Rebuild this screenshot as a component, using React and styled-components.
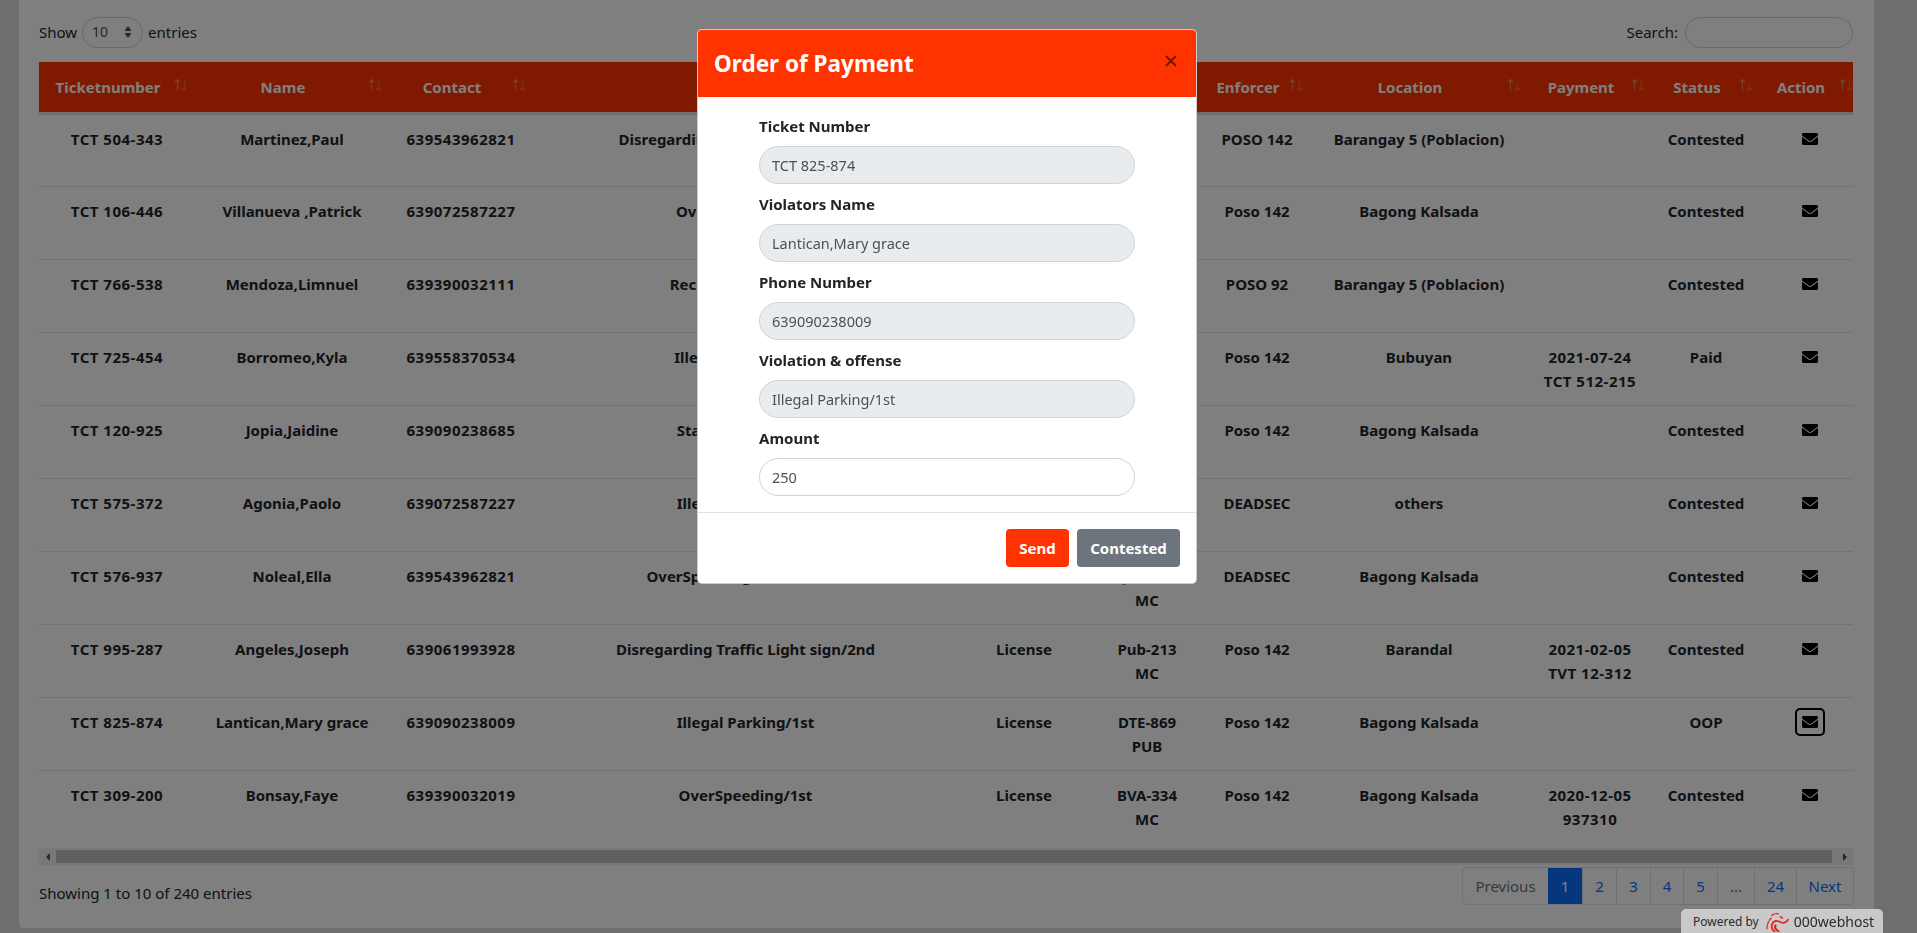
import React from "react";
import styled, { createGlobalStyle } from "styled-components";
import { FaEnvelope } from "react-icons/fa";

const FONT = `"Noto Sans", "Open Sans", "Liberation Sans", sans-serif`;

const Global = createGlobalStyle`
  html, body { margin: 0; height: 100%; overflow: hidden; }
  body { background: #dcdcdc; font-family: ${FONT}; font-size: 15px; line-height: 24px; color: #212529; }
  * { box-sizing: border-box; }
`;

const Page = styled.div`
  height: 933px;
  padding: 0 43px 5px 19px;
`;
const Card = styled.main`
  height: 100%;
  background: #fff;
  border-radius: 0 0 4px 4px;
  padding: 17px 21px 0 20px;
`;
const Controls = styled.div`
  display: flex;
  justify-content: space-between;
  align-items: center;
  height: 31px;
  margin-bottom: 14px;
`;
const Group = styled.label`
  display: flex;
  align-items: center;
  gap: ${p => p.$gap || 5}px;
  padding-bottom: 1px;
`;
const SelectBox = styled.div`
  width: 61px;
  height: 31px;
  border: 1px solid #ced4da;
  border-radius: 16px;
  display: flex;
  align-items: center;
  justify-content: space-between;
  padding: 0 10px 0 9px;
  color: #495057;
  font-size: 14px;
`;
const SearchBox = styled.input`
  width: 168px;
  height: 31px;
  border: 1px solid #ced4da;
  border-radius: 16px;
  background: #fff;
`;
const TableClip = styled.div`
  overflow: hidden;
`;
const Table = styled.table`
  width: 1821px;
  table-layout: fixed;
  border-collapse: collapse;
`;
const HeadRow = styled.tr`
  background: #ff3300;
  border-bottom: 3px solid #dcdcdc;
`;
const Th = styled.th`
  position: relative;
  height: 51px;
  padding: 12px 26px 12px 8px;
  color: #fff;
  font-weight: 700;
  text-align: center;
  white-space: nowrap;
`;
const SortMark = styled.svg`
  position: absolute;
  right: 7px;
  top: 17px;
  width: 14px;
  height: 12px;
`;
const Row = styled.tr`
  height: 73px;
  border-bottom: ${p => (p.$last ? "0" : "1px solid #dee2e6")};
`;
const Td = styled.td`
  padding: 12px ${p => (p.$wrap ? 20 : 8)}px 10px;
  font-weight: 700;
  letter-spacing: ${p => (p.$digits ? "0.5px" : "normal")};
  color: #212529;
  text-align: center;
  vertical-align: top;
`;
const MailButton = styled.span`
  display: inline-flex;
  align-items: center;
  justify-content: center;
  width: 30px;
  height: 28px;
  margin-top: -2px;
  border: 2px solid ${p => (p.$focus ? "#000" : "transparent")};
  border-radius: 5px;
  color: #000;
  font-size: 16px;
`;
const FakeScroll = styled.div`
  height: 17px;
  margin-top: 5px;
  background: #f1f1f1;
  display: flex;
  align-items: center;
`;
const ScrollEnd = styled.div`
  width: 17px;
  flex: none;
  display: flex;
  align-items: center;
  justify-content: center;
`;
const ScrollThumb = styled.div`
  flex: 1;
  height: 13px;
  margin-right: 4px;
  background: #c1c1c1;
`;
const Footer = styled.div`
  display: flex;
  justify-content: space-between;
  align-items: center;
  margin-top: 2px;
  height: 38px;
`;
const Info = styled.span`
  padding-top: 13px;
`;
const Pager = styled.nav`
  display: flex;
  height: 38px;
  margin-right: -1px;
  border: 1px solid #dee2e6;
  border-radius: 4px;
  overflow: hidden;
`;
const PageLink = styled.a`
  width: ${p => p.$w}px;
  display: flex;
  align-items: center;
  justify-content: center;
  border-left: ${p => (p.$first || p.$active ? "0" : "1px solid #dee2e6")};
  background: ${p => (p.$active ? "#0d6efd" : "transparent")};
  color: ${p => (p.$active ? "#fff" : p.$muted ? "#6c757d" : "#0d6efd")};
`;
const Backdrop = styled.div`
  position: fixed;
  inset: 0;
  background: rgba(0, 0, 0, 0.5);
`;
const Modal = styled.section`
  position: fixed;
  left: 697px;
  top: 29px;
  width: 500px;
  background: #fff;
  border: 1px solid rgba(0, 0, 0, 0.2);
  border-radius: 5px;
  overflow: hidden;
`;
const ModalHead = styled.header`
  height: 67px;
  background: #ff3300;
  display: flex;
  justify-content: space-between;
  padding: 0 19px 0 16px;
`;
const ModalTitle = styled.h5`
  margin: 0;
  align-self: center;
  font-size: 22.5px;
  font-weight: 700;
  color: #fff;
`;
const Close = styled.span`
  margin-top: 25px;
  width: 12px;
  height: 12px;
  display: flex;
  color: #000;
  opacity: 0.55;
`;
const ModalBody = styled.div`
  padding: 17px 61px 16px;
  display: grid;
  gap: 8px;
`;
const FieldLabel = styled.label`
  font-weight: 700;
  display: block;
  margin-bottom: 8px;
  height: 24px;
  color: #212529;
`;
const Field = styled.input`
  display: block;
  width: 376px;
  height: 38px;
  padding: 0 12px;
  border: 1px solid #ced4da;
  border-radius: 19px;
  background: ${p => (p.disabled ? "#e9ecef" : "#fff")};
  color: #495057;
  font: 400 14.5px ${FONT};
  opacity: 1;
`;
const ModalFoot = styled.footer`
  border-top: 1px solid #dee2e6;
  height: 71px;
  padding: 16px 16px 16px 0;
  display: flex;
  justify-content: flex-end;
  gap: 8px;
`;
const Btn = styled.button`
  width: ${p => p.$w}px;
  height: 38px;
  padding: 0;
  border: 0;
  border-radius: 4px;
  background: ${p => p.$bg};
  color: #fff;
  font: 700 15px ${FONT};
`;
const Badge = styled.aside`
  position: fixed;
  left: 1681px;
  bottom: 0;
  width: 202px;
  height: 24px;
  background: #c9c9c9;
  border-radius: 5px 5px 0 0;
  display: flex;
  align-items: center;
  padding: 2px 0 0 12px;
  color: #2a2a2a;
  font-size: 12px;
`;
const BadgeLogo = styled.svg`
  width: 23px;
  height: 20px;
  margin-left: 7px;
`;
const BadgeBrand = styled.span`
  font-size: 14px;
  margin-left: 5px;
`;

const cols = [156, 194, 144, 425, 132, 114, 106, 218, 124, 108, 100];
const heads = ["Ticketnumber", "Name", "Contact", "Violation", "Type", "Plate", "Enforcer", "Location", "Payment", "Status", "Action"];
const rows = [
  ["TCT 504-343", "Martinez,Paul", "639543962821", "Disregarding Traffic Light sign/1st", "License", "ABG-112 MC", "POSO 142", "Barangay 5 (Poblacion)", [], "Contested"],
  ["TCT 106-446", "Villanueva ,Patrick", "639072587227", "OverSpeeding/2nd", "License", "NBC-410 MC", "Poso 142", "Bagong Kalsada", [], "Contested"],
  ["TCT 766-538", "Mendoza,Limnuel", "639390032111", "Reckless Driving/1st", "License", "LKE-320 PUB", "POSO 92", "Barangay 5 (Poblacion)", [], "Contested"],
  ["TCT 725-454", "Borromeo,Kyla", "639558370534", "Illegal Parking/2nd", "License", "TRC-551 MC", "Poso 142", "Bubuyan", ["2021-07-24", "TCT 512-215"], "Paid"],
  ["TCT 120-925", "Jopia,Jaidine", "639090238685", "Stalled Vehicle/1st", "License", "PHL-772 PUB", "Poso 142", "Bagong Kalsada", [], "Contested"],
  ["TCT 575-372", "Agonia,Paolo", "639072587227", "Illegal Parking/1st", "License", "VXA-903 MC", "DEADSEC", "others", [], "Contested"],
  ["TCT 576-937", "Noleal,Ella", "639543962821", "OverSpeeding/Overloaded", "License", "QWE-218 MC", "DEADSEC", "Bagong Kalsada", [], "Contested"],
  ["TCT 995-287", "Angeles,Joseph", "639061993928", "Disregarding Traffic Light sign/2nd", "License", "Pub-213 MC", "Poso 142", "Barandal", ["2021-02-05", "TVT 12-312"], "Contested"],
  ["TCT 825-874", "Lantican,Mary grace", "639090238009", "Illegal Parking/1st", "License", "DTE-869 PUB", "Poso 142", "Bagong Kalsada", [], "OOP"],
  ["TCT 309-200", "Bonsay,Faye", "639390032019", "OverSpeeding/1st", "License", "BVA-334 MC", "Poso 142", "Bagong Kalsada", ["2020-12-05", "937310"], "Contested"],
];
const pages = [
  ["Previous", 85, "muted"], ["1", 34, "active"], ["2", 34], ["3", 34], ["4", 33], ["5", 34], ["...", 37, "muted"], ["24", 42], ["Next", 57],
];
const fields = [
  ["Ticket Number", "TCT 825-874", true],
  ["Violators Name", "Lantican,Mary grace", true],
  ["Phone Number", "639090238009", true],
  ["Violation & offense", "Illegal Parking/1st", true],
  ["Amount", "250", false],
];

const UpDown = () => (
  <svg width="8" height="14" viewBox="0 0 8 14">
    <path d="M4 0 L7.5 5 L0.5 5 Z" fill="#495057" transform="translate(0 1)" />
    <path d="M4 14 L7.5 9 L0.5 9 Z" fill="#495057" transform="translate(0 -1)" />
  </svg>
);
const Tri = ({ d }) => (
  <svg width="6" height="8" viewBox="0 0 6 8"><path d={d} fill="#505050" /></svg>
);
const X = () => (
  <svg width="12" height="12" viewBox="0 0 12 12">
    <path d="M1 1 L11 11 M11 1 L1 11" stroke="currentColor" strokeWidth="1.8" fill="none" />
  </svg>
);
const Sort = () => (
  <SortMark viewBox="0 0 14 12">
    <path d="M3.5 12 V1 M1 3.5 L3.5 0.5 L6 3.5" stroke="#fff" strokeOpacity="0.35" strokeWidth="1.2" fill="none" />
    <path d="M10.5 0 V11 M8 8.5 L10.5 11.5 L13 8.5" stroke="#fff" strokeOpacity="0.2" strokeWidth="1.2" fill="none" />
  </SortMark>
);
const Logo = () => (
  <BadgeLogo viewBox="0 0 24 20">
    <g fill="none" stroke="#e3241b" strokeLinecap="round">
      <path d="M9 20 C5 17 5 12 8.5 9.5 C11 8 14 9.5 16 10.5 C19 11.5 22 10 23 7.5" strokeWidth="1.8" />
      <path d="M13 19.5 C10 18 8.5 15.5 10 13.5" strokeWidth="2.2" />
      <path d="M1 17 C1 12 3 8 6 5.5" strokeWidth="1.3" strokeDasharray="3 1.5" />
      <path d="M6 3 C8 1.5 11 1 13 1.5" strokeWidth="1.3" strokeDasharray="3 1.5" />
      <path d="M15 4.5 L17 6" strokeWidth="1.6" />
    </g>
  </BadgeLogo>
);

export default function App() {
  return (
    <>
      <Global />
      <Page>
        <Card>
          <Controls>
            <Group>Show <SelectBox>10<UpDown /></SelectBox> entries</Group>
            <Group $gap={7}>Search: <SearchBox /></Group>
          </Controls>
          <TableClip>
            <Table>
              <colgroup>{cols.map((w, i) => <col key={i} style={{ width: w }} />)}</colgroup>
              <thead>
                <HeadRow>
                  {heads.map(h => <Th key={h}>{h}<Sort /></Th>)}
                </HeadRow>
              </thead>
              <tbody>
                {rows.map((r, i) => (
                  <Row key={r[0]} $last={i === rows.length - 1}>
                    {r.slice(0, 8).map((c, j) => (
                      <Td key={j} $wrap={j === 5} $digits={j === 0 || j === 2}>{c}</Td>
                    ))}
                    <Td $digits>{r[8].map(l => <div key={l}>{l}</div>)}</Td>
                    <Td>{r[9]}</Td>
                    <Td><MailButton $focus={i === 8}><FaEnvelope /></MailButton></Td>
                  </Row>
                ))}
              </tbody>
            </Table>
          </TableClip>
          <FakeScroll>
            <ScrollEnd><Tri d="M5 0 L1 4 L5 8 Z" /></ScrollEnd>
            <ScrollThumb />
            <ScrollEnd><Tri d="M1 0 L5 4 L1 8 Z" /></ScrollEnd>
          </FakeScroll>
          <Footer>
            <Info>Showing 1 to 10 of 240 entries</Info>
            <Pager>
              {pages.map(([t, w, k], i) => (
                <PageLink key={t} $w={w} $first={i === 0} $active={k === "active"} $muted={k === "muted"}>{t}</PageLink>
              ))}
            </Pager>
          </Footer>
        </Card>
      </Page>
      <Backdrop />
      <Modal>
        <ModalHead>
          <ModalTitle>Order of Payment</ModalTitle>
          <Close><X /></Close>
        </ModalHead>
        <ModalBody>
          {fields.map(([l, v, d]) => (
            <div key={l}>
              <FieldLabel>{l}</FieldLabel>
              <Field defaultValue={v} disabled={d} />
            </div>
          ))}
        </ModalBody>
        <ModalFoot>
          <Btn $w={63} $bg="#ff3300">Send</Btn>
          <Btn $w={103} $bg="#6c757d">Contested</Btn>
        </ModalFoot>
      </Modal>
      <Badge>Powered by <Logo /><BadgeBrand>000webhost</BadgeBrand></Badge>
    </>
  );
}
